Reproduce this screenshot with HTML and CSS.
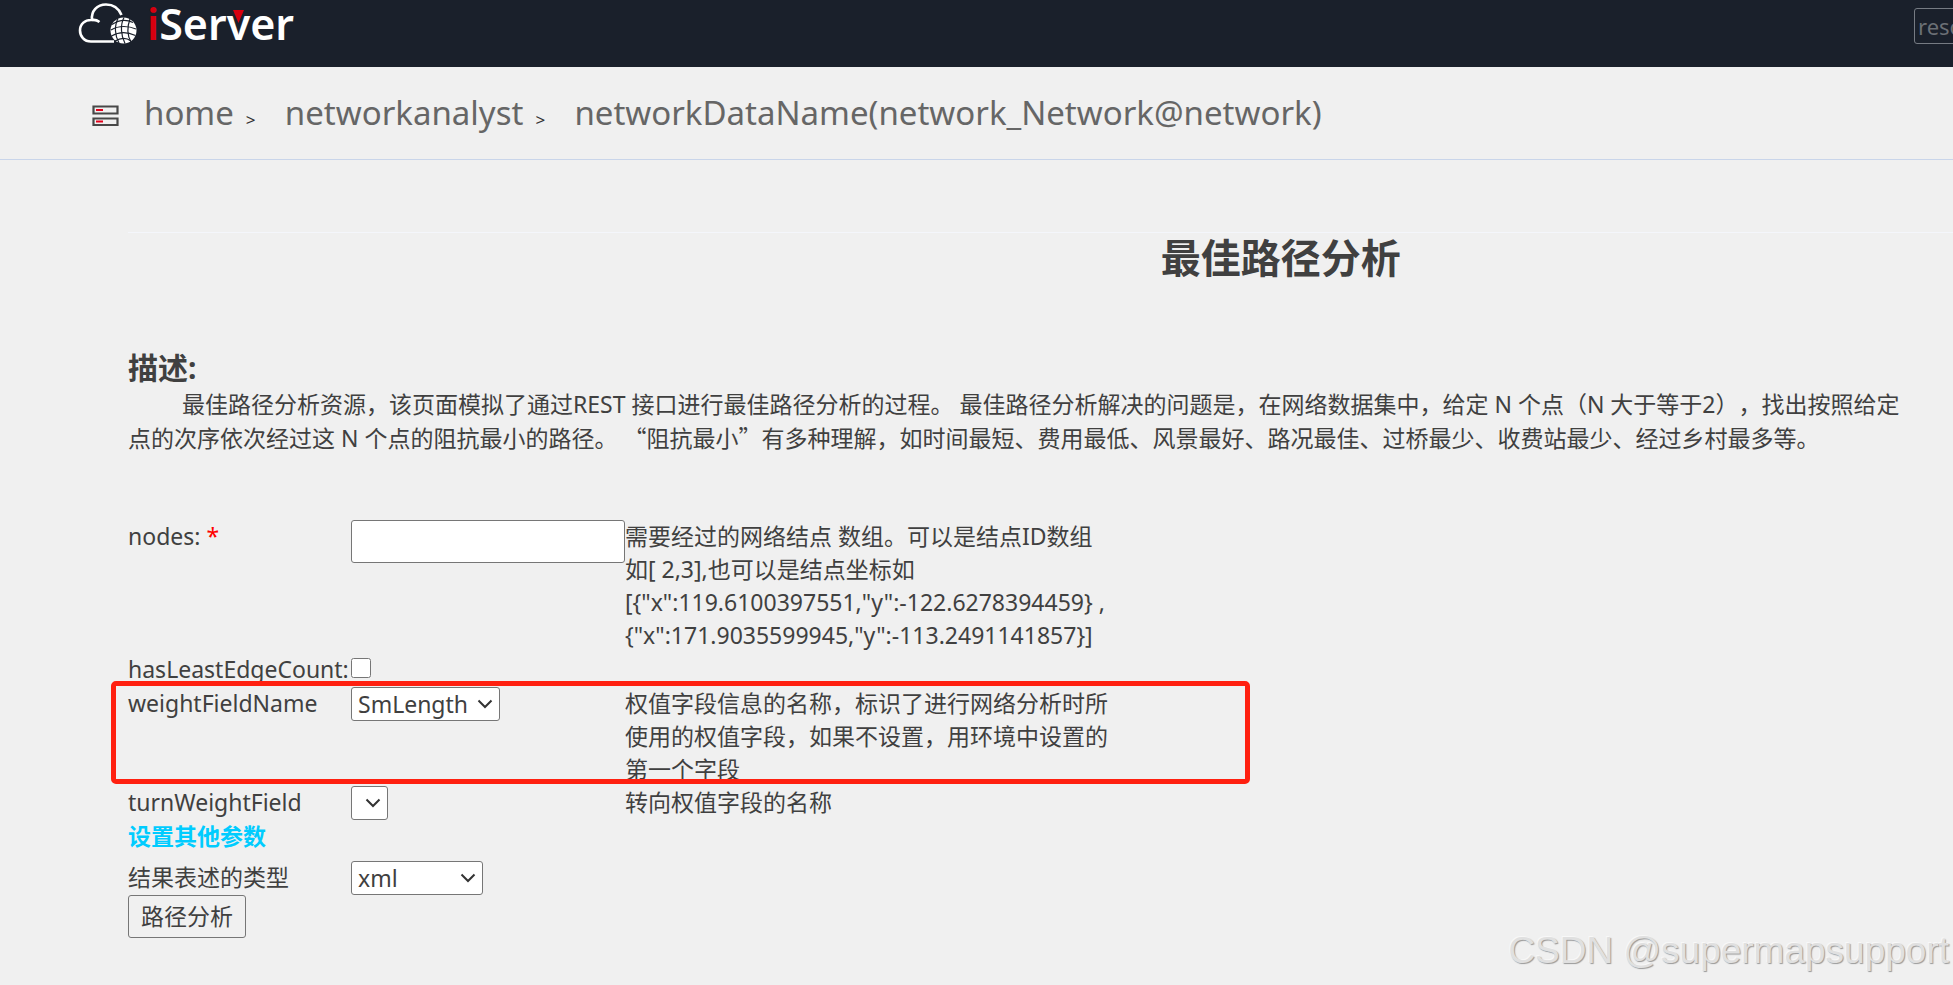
FILE: index.html
```html
<!DOCTYPE html>
<html lang="zh-CN">
<head>
<meta charset="utf-8">
<title>最佳路径分析</title>
<link rel="stylesheet" href="styles.css">
</head>
<body>
<header class="topbar">
  <a class="logo" href="#" aria-label="iServer">
    <svg class="logo-cloud" width="60" height="44" viewBox="0 0 60 44" fill="none" aria-hidden="true">
      <path d="M36 41.500H13C6 41.500 2 36 2 30.500C2 24 7 19.500 14 20C13 11 19 4.500 28 4.500C36 4.500 41 9 43.500 15M14 20C17 19.500 19.500 20.500 21.500 22" stroke="#fff" stroke-width="2.600"/>
      <circle cx="45.500" cy="30.500" r="13" fill="#fff"/>
      <g stroke="#1a202b" stroke-width="1.200">
        <path d="M34 24.500C42 19 50 20 55 22.500M33 30C41 25 51 26 58 29M33.500 36C41 31.500 50 32 57.500 35.500M37 41C43 37.500 49 38 53 41"/>
        <path d="M40 18.500C36 26 37 36 41 43M46 17.500C42 25 43 36 47 43.500M52 19C49 27 49 35 53 42"/>
      </g>
    </svg>
    <span class="logo-text"><span class="logo-i">i</span>Ser<span class="logo-v">v<svg class="logo-tri" width="11" height="13" viewBox="0 0 11 13" aria-hidden="true"><path d="M0 0H11L5.500 13Z" fill="#d7000f"/></svg></span>er</span>
  </a>
  <div class="search"><input class="search-box" type="text" placeholder="resource" aria-label="resource"></div>
</header>

<nav class="crumbs">
  <svg class="crumb-icon" width="27" height="22" viewBox="0 0 27 22" aria-hidden="true">
    <path d="M1.500 1.500H25.500V8.500H1.500ZM1.500 13.500H25.500V20H1.500Z" fill="#f0f0f0" stroke="#484848" stroke-width="2.200"/>
    <path d="M4 5H11M4 16.500H11" stroke="#e2001a" stroke-width="2"/>
  </svg>
  <a class="crumb" href="#">home</a><span class="sep">&gt;</span>
  <a class="crumb" href="#">networkanalyst</a><span class="sep">&gt;</span>
  <a class="crumb" href="#">networkDataName(network_Network@network)</a>
</nav>

<main class="content">
  <h1 class="title">最佳路径分析</h1>
  <h2 class="subtitle">描述:</h2>
  <p class="desc">最佳路径分析资源，该页面模拟了通过REST 接口进行最佳路径分析的过程。 最佳路径分析解决的问题是，在网络数据集中，给定 N 个点（N 大于等于2），找出按照给定<br>点的次序依次经过这 N 个点的阻抗最小的路径。 <span class="cjk">“</span>阻抗最小<span class="cjk">”</span>有多种理解，如时间最短、费用最低、风景最好、路况最佳、过桥最少、收费站最少、经过乡村最多等。</p>

  <form class="form">
    <div class="row">
      <label for="nodes">nodes: <span class="req">*</span></label>
      <input class="textbox" id="nodes" type="text">
      <div class="help">需要经过的网络结点 数组。可以是结点ID数组<br>如[ 2,3],也可以是结点坐标如<br>[{"x":119.6100397551,"y":-122.6278394459} ,<br>{"x":171.9035599945,"y":-113.2491141857}]</div>
    </div>
    <div class="row row-check">
      <label for="least">hasLeastEdgeCount:</label>
      <input class="check" id="least" type="checkbox">
    </div>
    <div class="row marked">
      <label for="weight">weightFieldName</label>
      <div class="pick"><select class="select" id="weight"><option>SmLength</option></select><svg class="chev" width="16" height="10" viewBox="0 0 16 10" aria-hidden="true"><path d="M1.500 1.500L8 8L14.500 1.500" fill="none" stroke="#333" stroke-width="2"/></svg></div>
      <div class="help">权值字段信息的名称，标识了进行网络分析时所<br>使用的权值字段，如果不设置，用环境中设置的<br>第一个字段</div>
    </div>
    <div class="row">
      <label for="turn">turnWeightField</label>
      <div class="pick pick-empty"><select class="select" id="turn"><option></option></select><svg class="chev" width="16" height="10" viewBox="0 0 16 10" aria-hidden="true"><path d="M1.500 1.500L8 8L14.500 1.500" fill="none" stroke="#333" stroke-width="2"/></svg></div>
      <div class="help">转向权值字段的名称</div>
    </div>
    <a class="more" href="#">设置其他参数</a>
    <div class="row row-format">
      <label for="format">结果表述的类型</label>
      <div class="pick pick-format"><select class="select" id="format"><option>xml</option></select><svg class="chev" width="16" height="10" viewBox="0 0 16 10" aria-hidden="true"><path d="M1.500 1.500L8 8L14.500 1.500" fill="none" stroke="#333" stroke-width="2"/></svg></div>
    </div>
    <button class="submit" type="button">路径分析</button>
  </form>
</main>
<div class="watermark">CSDN @supermapsupport</div>
</body>
</html>
```
FILE: styles.css
```css
* { box-sizing: border-box; }
body {
  margin: 0;
  position: relative;
  min-height: 100vh;
  overflow: hidden;
  background: #f0f0f0;
  color: #404040;
  font: 23px/33px "Noto Sans", "Noto Sans CJK SC", sans-serif;
  text-spacing-trim: space-all;
}
a { text-decoration: none; }
input, select, button { font: inherit; color: inherit; margin: 0; }

.topbar {
  display: flex;
  justify-content: space-between;
  height: 67px;
  padding-left: 78px;
  background: #1a202b;
}
.logo { display: flex; align-items: flex-start; gap: 9px; color: #fff; }
.logo-text { font-size: 43px; line-height: 48px; font-weight: 600; }
.logo-i { color: #d7000f; }
.logo-v { position: relative; }
.logo-tri { position: absolute; left: 6px; top: 16px; }
.search { width: 39px; padding-top: 8px; }
.search-box {
  width: 240px;
  height: 36px;
  padding: 0 3px;
  border: 1px solid #767b83;
  border-radius: 3px;
  background: transparent;
  font-size: 22px;
}
.search-box::placeholder { color: #6b6f75; opacity: 1; }

.crumbs {
  display: flex;
  align-items: center;
  height: 93px;
  padding-left: 92px;
  border-bottom: 1px solid #c9d5ea;
}
.crumb-icon { margin-right: 25px; margin-top: 6px; }
.crumb { color: #666; font-size: 33px; line-height: 48px; }
.sep { width: 51px; padding-left: 12px; padding-top: 14px; font-size: 17px; line-height: 24px; color: #333; }

.content { padding: 72px 0 0 128px; }
.title {
  width: 126%;
  margin: 0;
  padding-left: 6px;
  border-top: 1px solid #f4f6fb;
  font-size: 40px;
  line-height: 50px;
  text-align: center;
}
.subtitle { margin: 65px 0 0; font-size: 30px; line-height: 40px; }
.desc { margin: 0; text-indent: 54px; white-space: nowrap; }
.cjk { font-family: "Noto Sans CJK SC", sans-serif; }

.form { margin-top: 65px; }
.row {
  display: grid;
  grid-template-columns: 223px 274px 500px;
  align-items: start;
}
.row-check { padding-top: 1px; margin-bottom: 1px; }
.help { white-space: nowrap; }
.req { color: #f00; }
.textbox {
  width: 100%;
  height: 43px;
  border: 1px solid #767676;
  border-radius: 3px;
  background: #fff;
}
.check { width: 20px; height: 20px; margin-top: 5px; }
.marked { position: relative; width: 1122px; }
.marked::after {
  content: "";
  position: absolute;
  left: -17px;
  right: 0;
  top: -6px;
  bottom: 2px;
  border: 5px solid #ff2010;
  border-radius: 5px;
  pointer-events: none;
}
.pick { position: relative; width: 149px; }
.pick-empty { width: 37px; }
.pick-format { width: 132px; }
.select {
  display: block;
  appearance: none;
  width: 100%;
  height: 34px;
  padding: 0 6px;
  border: 1px solid #767676;
  border-radius: 3px;
  background: #fff;
}
.chev { position: absolute; right: 7px; top: 12px; pointer-events: none; }
.more { display: block; width: max-content; margin-bottom: 8px; color: #0cf; font-weight: bold; }
.submit {
  display: block;
  height: 43px;
  padding: 0 12px;
  border: 1px solid #767676;
  border-radius: 3px;
  background: #f0f0f0;
}
.watermark {
  position: absolute;
  right: 4px;
  bottom: 12px;
  color: #e0e0e0;
  font: 37px/44px "Liberation Sans", sans-serif;
  text-shadow: 1px 1px 1px #999, -1px -1px 0 #f8f8f8;
}
```
